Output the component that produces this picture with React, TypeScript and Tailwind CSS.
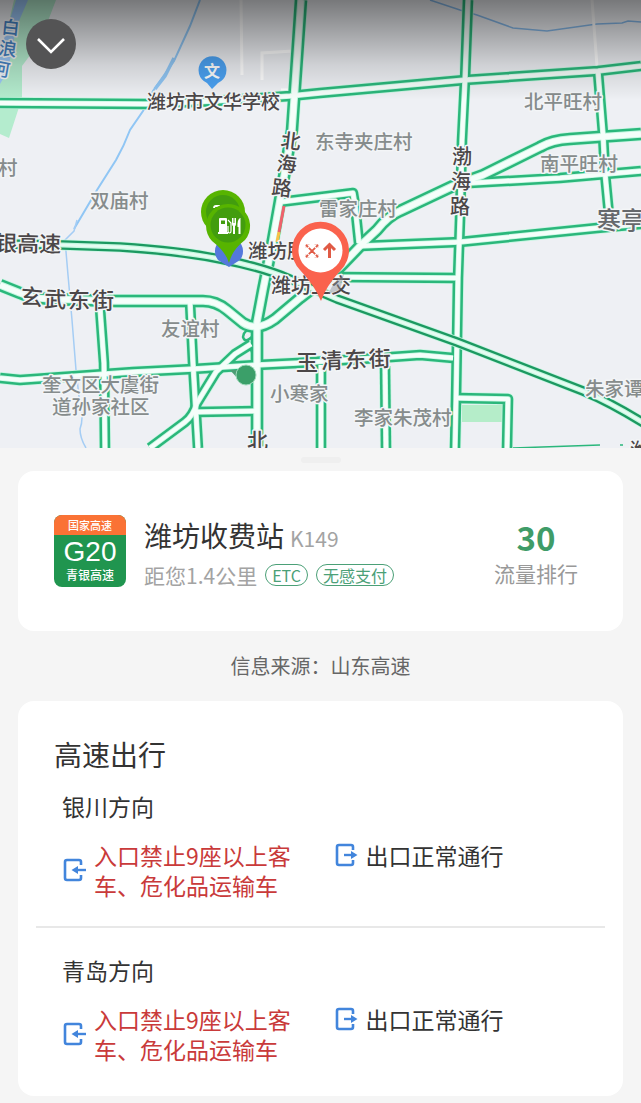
import { clsx } from "clsx"

type Road = { d: string; wide?: boolean }

const roads: Road[] = [
    { d: "M0 103 L146 104 L215 101 L290 96 L320 93 L465 80 L598 71 L641 66" },
    { d: "M301 0 L292 130 L280 200 L272 245 L263 290 L257 322 L257 448", wide: true },
    { d: "M468 0 L465 80 L462 140 L460 220 L458 278 L457 340 L456 400 L455 448" },
    { d: "M280 202 L353 193 L355 205 L359 243" },
    { d: "M641 134 L598 137 L570 139 Q552 140 540 147 L483 175 L453 186 L400 211 Q388 216 377 230 L363 243 L340 267 L300 298 L275 319 Q257 332 243 323 L227 310 Q216 301 203 301 L115 301 L50 299 Q30 298 20 293 L0 285", wide: true },
    { d: "M470 183 L560 178 L641 171" },
    { d: "M598 72 L603 134 L605 173 L609 215" },
    { d: "M360 246 L460 242 L597 228 L641 224" },
    { d: "M335 277 L457 278" },
    { d: "M0 378 L20 380 L133 372 L193 369 L257 365 L298 363 L392 357 L420 355 L453 358" },
    { d: "M100 308 L104 363 L105 448" },
    { d: "M190 302 L193 363 L198 448" },
    { d: "M251 344 L235 354 L216 372 L197 403 Q193 416 185 422 L150 448" },
    { d: "M197 412 L257 411" },
    { d: "M321 365 L321 448" },
    { d: "M385 366 L386 448" },
    { d: "M457 398 L508 399 L507 448" },
]

const expressway =
    "M0 244 L63 245 L120 247 Q180 251 220 259 Q262 267 290 279 L337 299 L457 342 L583 391 Q612 403 650 427"

type Label = { text: string; x: number; y: number; size?: number; tone?: string; rotate?: number }

const dark = "#4b4748"
const grey = "#868c8c"

const labels: Label[] = [
    { text: "潍坊市文华学校", x: 147, y: 109, size: 19, tone: dark },
    { text: "北平旺村", x: 524, y: 109 },
    { text: "东寺夹庄村", x: 315, y: 149 },
    { text: "南平旺村", x: 540, y: 171 },
    { text: "双庙村", x: 90, y: 208 },
    { text: "村", x: -2, y: 175 },
    { text: "雷家庄村", x: 319, y: 216 },
    { text: "友谊村", x: 161, y: 336 },
    { text: "奎文区大虞街", x: 42, y: 392 },
    { text: "道孙家社区", x: 52, y: 414 },
    { text: "小寒家", x: 270, y: 401 },
    { text: "李家朱茂村", x: 354, y: 425 },
    { text: "朱家谭", x: 585, y: 396 },
    { text: "潍坊服", x: 248, y: 258, tone: dark },
    { text: "潍坊立交", x: 271, y: 293, size: 20, tone: dark },
    { text: "寒亭", x: 597, y: 229, size: 24, tone: "#66686c" },
    // road names, placed glyph by glyph along the road
    { text: "北", x: 280, y: 147, size: 20, tone: dark, rotate: 7 },
    { text: "海", x: 276, y: 170, size: 20, tone: dark, rotate: 7 },
    { text: "路", x: 271, y: 194, size: 20, tone: dark, rotate: 7 },
    { text: "渤", x: 452, y: 164, size: 20, tone: dark },
    { text: "海", x: 451, y: 189, size: 20, tone: dark },
    { text: "路", x: 450, y: 214, size: 20, tone: dark },
    { text: "银高速", x: -5, y: 251, size: 22, tone: dark, rotate: 1 },
    { text: "玄", x: 20, y: 304, size: 22, tone: dark, rotate: 5 },
    { text: "武", x: 44, y: 307, size: 22, tone: dark, rotate: 2 },
    { text: "东", x: 68, y: 308, size: 22, tone: dark },
    { text: "街", x: 92, y: 308, size: 22, tone: dark },
    { text: "玉", x: 296, y: 370, size: 22, tone: dark },
    { text: "清", x: 321, y: 369, size: 22, tone: dark, rotate: -2 },
    { text: "东", x: 345, y: 368, size: 22, tone: dark, rotate: -2 },
    { text: "街", x: 369, y: 367, size: 22, tone: dark, rotate: -2 },
    { text: "北", x: 247, y: 448, size: 21, tone: dark },
    { text: "潍", x: 630, y: 458, size: 20, tone: dark },
]

const water = [
    { text: "白", x: 1, y: 33, rotate: 6 },
    { text: "浪", x: -2, y: 54, rotate: 8 },
    { text: "河", x: -9, y: 74, rotate: 10 },
]

const MapView = () => (
    <svg viewBox="0 0 641 448" className="block h-auto w-full" role="img" aria-label="潍坊收费站">
        <defs>
            <linearGradient id="shade" x1="0" y1="0" x2="0" y2="1">
                <stop offset="0" stopColor="#000" stopOpacity="0.5" />
                <stop offset="0.35" stopColor="#000" stopOpacity="0.3" />
                <stop offset="0.65" stopColor="#000" stopOpacity="0.13" />
                <stop offset="1" stopColor="#000" stopOpacity="0" />
            </linearGradient>
        </defs>
        <rect width="641" height="448" fill="#eef0f4" />

        {/* parks and river */}
        <path d="M14 0 H56 L40 42 L22 66 V98 L9 138 L0 134 V60 Z" fill="#b4ecce" />
        <path d="M16 0 H28 L16 28 L8 70 L0 84 V52 Z" fill="#9cc8f8" />
        <path d="M462 405 H502 V422 H462 Z" fill="#b5edc9" />
        <path d="M200 0 L190 26 L174 61 L153 91 L143 111 L130 130 Q124 146 116 160 L97 190 L74 229" fill="none" stroke="#90c6f4" strokeWidth="2" />
        <path d="M174 58 L165 76 L155 89" fill="none" stroke="#90c6f4" strokeWidth="3.5" />
        <path d="M77 220 L74 231 L65 240 L68 275 L72 320 L76 370 L80 405 Q84 418 80 429 Q80 438 86 448" fill="none" stroke="#a5cdf4" strokeWidth="1.5" />
        <path d="M430 0 L460 10 L477 15 L513 28 L547 31 L597 24 L622 23 L628 21 L641 22" fill="none" stroke="#86b9ea" strokeWidth="1.5" />

        {/* minor roads */}
        <path d="M241 0 L242 75 M262 80 V53 L293 51 M281 90 H288 M592 0 L597 66" fill="none" stroke="#fff" strokeWidth="3" />

        {/* casings first so that the crossings stay open */}
        <g fill="none" strokeLinejoin="round">
            {roads.map(r => <path key={r.d} d={r.d} stroke="#c5f6e1" strokeWidth={r.wide ? 14 : 12} />)}
            {roads.map(r => <path key={r.d} d={r.d} stroke="#2bb77b" strokeWidth={r.wide ? 12.5 : 10.5} />)}
            <path d="M254 328 Q243 330 243 337 Q245 344 253 336 M250 348 Q254 354 253 362" stroke="#2bb77b" strokeWidth="2.5" />
            {roads.map(r => <path key={r.d} d={r.d} stroke="#c5f6e1" strokeWidth={r.wide ? 7.5 : 5.5} />)}
            {roads.map(r => <path key={r.d} d={r.d} stroke="#f5fefa" strokeWidth={r.wide ? 5.5 : 4} />)}
            <path d="M513 448 L600 445 M620 445 L623 445" stroke="#2bb77b" strokeWidth="1.5" />
            <path d={expressway} stroke="#c5f6e1" strokeWidth="11" />
            <path d={expressway} stroke="#1c9961" strokeWidth="9.5" />
            <path d={expressway} stroke="#c6f7e0" strokeWidth="5" />
            <path d={expressway} stroke="#e6fcf2" strokeWidth="2.5" />
            <path d="M284 206 L279 232" stroke="#f0616b" strokeWidth="3" />
            <path d="M279 232 L277 242" stroke="#f8c246" strokeWidth="3" />
        </g>

        <g stroke="#f3f5f7" strokeWidth="3" strokeLinejoin="round" fontWeight="500" paintOrder="stroke">
            {labels.map((l, i) => (
                <text
                    key={i}
                    x={l.x}
                    y={l.y}
                    fontSize={l.size ?? 19.5}
                    fill={l.tone ?? grey}
                    transform={l.rotate ? `rotate(${l.rotate} ${l.x} ${l.y})` : undefined}
                >
                    {l.text}
                </text>
            ))}
            {water.map(l => (
                <text key={l.text} x={l.x} y={l.y} fontSize="18" fill="#4583c4" transform={`rotate(${l.rotate} ${l.x} ${l.y})`}>
                    {l.text}
                </text>
            ))}
        </g>

        {/* school */}
        <path d="M212 89 L207 83 A14 14 0 1 1 218 83 Z" fill="#4ba2f3" />
        <text x="212" y="77" fontSize="16" fontWeight="700" fill="#fff" textAnchor="middle">文</text>

        {/* current position */}
        <path d="M230 370 L241 370 L239 380 Z" fill="#4c9d74" />
        <circle cx="246" cy="375" r="10" fill="#3b9f69" stroke="#9fd8bb" strokeWidth="1" />

        {/* service area pins */}
        <path d="M229 267 L218 260 A14 14 0 1 1 240 260 Z" fill="#5478dc" />
        <circle cx="223" cy="212" r="22" fill="#57b400" />
        <circle cx="223" cy="212" r="17" fill="#429d0e" />
        <path d="M214 208 Q214 206 216 206 H220" fill="none" stroke="#fff" strokeWidth="1.8" />
        <path d="M229 263 Q226 252 212 241 A22 22 0 1 1 245 240 Q232 250 229 263 Z" fill="#57b400" />
        <circle cx="228" cy="225" r="17.5" fill="#429d0e" />
        <g fill="#fff">
            <path d="M219 219 Q219 218 220 218 H226 Q227 218 227 219 V232 H228 V234 H218 V232 H219 Z M221 220.500 V224 H225 V220.500 Z" fillRule="evenodd" />
            <path d="M228 220 L231 223 V231 Q231 233 229.500 233 Q228 233 228 231 V226" fill="none" stroke="#fff" strokeWidth="1.2" />
            <path d="M232 218 V224 Q232 226 233 226 V234 H235 V226 Q236 226 236 224 V218 H235 V223 H234.500 V218 H233.500 V223 H233 V218 Z" />
            <path d="M240 218 Q237 220 237.500 227 H238.500 V234 H240.500 V218 Z" />
        </g>

        {/* toll station pin */}
        <path d="M334 283 L344 274 L340 290 L328 294 Z" fill="#8b9199" opacity="0.45" />
        <path d="M321 301 Q315 286 300 270 A28.500 28.500 0 1 1 341 270 Q326 286 321 301 Z" fill="#fa624d" />
        <circle cx="320.500" cy="250.500" r="22" fill="#fff" />
        <g fill="none" stroke="#e05a45">
            <path d="M306 245 L318 257 M318 245 L306 257" strokeWidth="1.8" strokeDasharray="3 1 9 1 3" />
            <path d="M306 248 V244.500 H309.500 M314.500 244.500 H318 V248 M306 254 V257.500 H309.500 M314.500 257.500 H318 V254" strokeWidth="0.8" opacity="0.4" />
            <path d="M329.500 258 V245 M324 250 L329.500 244.500 L335 250" strokeWidth="3" />
        </g>

        <rect width="641" height="100" fill="url(#shade)" />
    </svg>
)

const GateIcon = ({ exit = false }: { exit?: boolean }) => (
    <svg viewBox="0 0 24 24" className="size-6 shrink-0" fill="none" stroke="#4285dc" aria-hidden="true">
        <path d="M19 7 V4 Q19 2 17 2 H5 Q3 2 3 4 V20 Q3 22 5 22 H17 Q19 22 19 20 V17" strokeWidth="2.600" />
        {exit ? (
            <>
                <path d="M10 12 H19" strokeWidth="2.400" />
                <path d="M17 8 L23.500 12 L17 16 Z" fill="#4285dc" stroke="none" />
            </>
        ) : (
            <>
                <path d="M14 12 H24" strokeWidth="2.400" />
                <path d="M16 8 L9.500 12 L16 16 Z" fill="#4285dc" stroke="none" />
            </>
        )}
    </svg>
)

const Tag = ({ children }: { children: string }) => (
    <span className="rounded-full border border-[#4ba077] px-1.5 text-base leading-5 text-[#4ba077]">{children}</span>
)

const directions = [
    { name: "银川方向", entry: "入口禁止9座以上客车、危化品运输车", exit: "出口正常通行" },
    { name: "青岛方向", entry: "入口禁止9座以上客车、危化品运输车", exit: "出口正常通行" },
]

export default function App() {
    return (
        <div className="min-h-screen bg-[#f5f5f5] pb-1.5 font-['Noto_Sans_CJK_SC',sans-serif] text-[#333]">
            <div className="relative">
                <MapView />
                <button
                    type="button"
                    aria-label="收起"
                    className="absolute left-[26px] top-[19px] flex size-[50px] items-center justify-center rounded-full bg-[#545455]"
                >
                    <svg viewBox="0 0 28 16" className="mt-1 w-7" fill="none" stroke="#fff" strokeWidth="2.6">
                        <path d="M1 1 L14 14 L27 1" />
                    </svg>
                </button>
            </div>

            <main className="px-[18px]">
                <div className="flex h-[23px] items-center justify-center">
                    <div className="h-1.5 w-10 rounded-full bg-[#efefef]"></div>
                </div>

                {/* Toll station */}
                <section className="flex items-center rounded-2xl bg-white pb-10 pl-9 pr-[45px] pt-11">
                    <div className="mb-1 flex size-[72px] shrink-0 flex-col overflow-hidden rounded-lg bg-[#20954f] text-center text-white">
                        <span className="bg-[#fa7235] text-[11px] font-medium leading-5">国家高速</span>
                        <span className="font-['Liberation_Sans',sans-serif] text-[28px] leading-[34px]">
                            G20
                        </span>
                        <span className="text-[12px] font-medium leading-3">青银高速</span>
                    </div>
                    <div className="ml-[18px] flex-1">
                        <div className="flex items-baseline gap-1.5">
                            <h1 className="text-[28px] leading-10">潍坊收费站</h1>
                            <span className="text-[21px] text-[#a3a3a3]">K149</span>
                        </div>
                        <div className="mt-1 flex items-center gap-2">
                            <span className="text-[21px] leading-8 text-[#a3a3a3]">距您1.4公里</span>
                            <Tag>ETC</Tag>
                            <Tag>无感支付</Tag>
                        </div>
                    </div>
                    <div className="text-center">
                        <div className="text-[33px] font-bold leading-10 text-[#3f9c68]">30</div>
                        <div className="text-[21px] leading-8 text-[#999]">流量排行</div>
                    </div>
                </section>

                <p className="py-5 text-center text-[20px] leading-[30px] text-[#666]">信息来源：山东高速</p>

                {/* Travel status */}
                <section className="rounded-2xl bg-white px-[18px] pb-1.5 pt-[33px]">
                    <h2 className="px-[18px] text-[28px] leading-10">高速出行</h2>
                    {directions.map((direction, index) => (
                        <div
                            key={direction.name}
                            className={clsx("pb-[26px] pl-[26px]", index === 0 ? "pt-4" : "border-t-2 border-[#e8e8e8] pt-[26px]")}
                        >
                            <h3 className="text-[23px] leading-8">{direction.name}</h3>
                            <div className="mt-[18px] grid grid-cols-2 items-start text-[23px] leading-[30px]">
                                <div className="flex items-center gap-2 pr-6">
                                    <GateIcon />
                                    <p className="text-[#c93a3a]">{direction.entry}</p>
                                </div>
                                <div className="flex items-center gap-2">
                                    <GateIcon exit />
                                    <p>{direction.exit}</p>
                                </div>
                            </div>
                        </div>
                    ))}
                </section>
            </main>
        </div>
    )
}
